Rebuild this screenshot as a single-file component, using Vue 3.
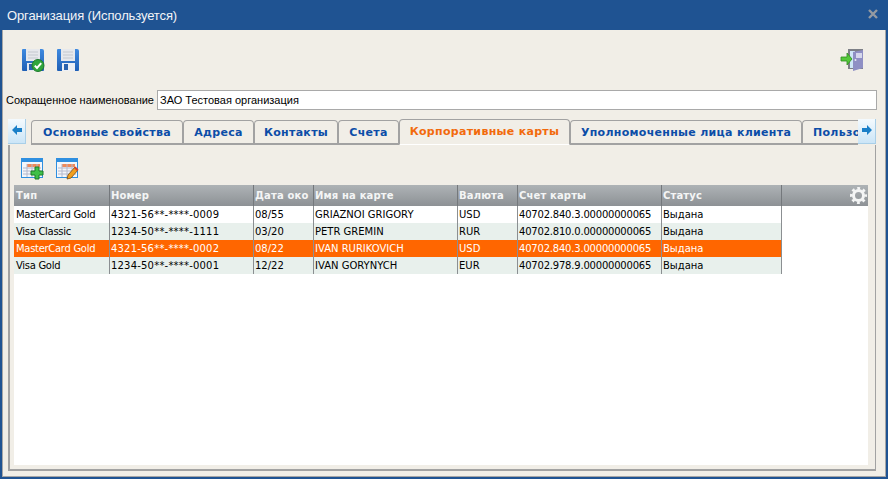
<template>
  <div class="window">
    <div class="titlebar">
      <span class="title">Организация (Используется)</span>
      <svg class="close" width="10" height="10" viewBox="0 0 10 10">
        <path d="M1 1 L9 9 M9 1 L1 9" stroke="#949aa2" stroke-width="2.4" />
      </svg>
    </div>

    <div class="body">
      <div class="toolbar">
        <div class="toolbar-left">
          <svg class="icon" width="24" height="24" viewBox="0 0 24 24">
            <defs>
              <linearGradient id="disk" x1="0" y1="0" x2="0" y2="1">
                <stop offset="0" stop-color="#3f8ae0" />
                <stop offset="1" stop-color="#1f5fb5" />
              </linearGradient>
            </defs>
            <path d="M1 2 Q1 1 2 1 H21 Q23 1 23 3 V22 Q23 23 22 23 H2 Q1 23 1 22 Z" fill="url(#disk)" />
            <rect x="5" y="1" width="14" height="12" fill="#e6e8ec" />
            <path d="M7 4 H17 M7 7 H17 M7 10 H17" stroke="#c4c8ce" stroke-width="1.2" />
            <rect x="6" y="15" width="12" height="8" fill="#e4e8f0" />
            <rect x="8" y="16" width="4" height="6" fill="#2a62ae" />
            <circle cx="17" cy="17.5" r="6" fill="#2fa53c" stroke="#1f7a2c" />
            <path d="M13.8 17.6 L16 20 L20.2 15.2" fill="none" stroke="#fff" stroke-width="2" />
          </svg>
          <svg class="icon" width="24" height="24" viewBox="0 0 24 24">
            <path d="M1 2 Q1 1 2 1 H21 Q23 1 23 3 V22 Q23 23 22 23 H2 Q1 23 1 22 Z" fill="url(#disk)" />
            <rect x="5" y="1" width="14" height="12" fill="#e6e8ec" />
            <path d="M7 4 H17 M7 7 H17 M7 10 H17" stroke="#c4c8ce" stroke-width="1.2" />
            <rect x="6" y="15" width="13" height="8" fill="#eceff5" />
            <rect x="8" y="16" width="4" height="6" fill="#2a62ae" />
          </svg>
        </div>
        <svg class="icon" width="24" height="24" viewBox="0 0 24 24">
          <rect x="8" y="1" width="15" height="20" fill="#7d7f86" />
          <rect x="10" y="3" width="5" height="17" fill="#cfe6f7" />
          <path d="M13 4 L23 2 V20 L13 23 Z" fill="#8f8fc4" />
          <rect x="16" y="5" width="6" height="5" fill="#d5d7ec" />
          <circle cx="15.5" cy="12" r="1" fill="#e8e8f2" />
          <path d="M1 9 H7 V5 L12 11 L7 17 V13 H1 Z" fill="#55c83a" stroke="#2d8d1e" stroke-width="0.8" />
        </svg>
      </div>

      <div class="name-row">
        <label class="name-label">Сокращенное наименование</label>
        <input class="name-input" value="ЗАО Тестовая организация" />
      </div>

      <div class="tabs-row">
        <button class="scroll-btn">
          <svg width="10" height="10" viewBox="0 0 10 10"><path d="M0 5 L5 0 V3 H10 V7 H5 V10 Z" fill="#1a7fc8" /></svg>
        </button>
        <div class="tabs">
          <div
            v-for="tab in tabs"
            :key="tab.label"
            class="tab"
            :class="{ 'tab--active': tab.active }"
            :style="{ width: `${tab.width}px` }"
          >{{ tab.label }}</div>
        </div>
        <button class="scroll-btn">
          <svg width="10" height="10" viewBox="0 0 10 10"><path d="M10 5 L5 0 V3 H0 V7 H5 V10 Z" fill="#1a7fc8" /></svg>
        </button>
      </div>

      <div class="panel">
        <div class="panel-tools">
          <svg class="icon" width="23" height="22" viewBox="0 0 23 22">
            <rect x="0.5" y="0.5" width="21" height="19" fill="#f4f6fa" stroke="#2f8fe0" />
            <rect x="1" y="1" width="20" height="3" fill="#2f8fe0" />
            <rect x="6" y="6" width="13" height="3" fill="#f08a5a" />
            <path d="M2 10 H20 M2 13 H20 M2 16 H20 M6 6 V19 M11 6 V19 M16 6 V19" stroke="#b4b8cc" stroke-width="1" />
            <path d="M14 9 H18 V13 H22 V17 H18 V21 H14 V17 H10 V13 H14 Z" fill="#3fc048" stroke="#1c7a26" stroke-width="1" />
          </svg>
          <svg class="icon" width="23" height="22" viewBox="0 0 23 22">
            <rect x="0.5" y="0.5" width="21" height="19" fill="#f4f6fa" stroke="#2f8fe0" />
            <rect x="1" y="1" width="20" height="3" fill="#2f8fe0" />
            <rect x="6" y="6" width="13" height="3" fill="#f08a5a" />
            <path d="M2 10 H20 M2 13 H20 M2 16 H20 M6 6 V19 M11 6 V19 M16 6 V19" stroke="#b4b8cc" stroke-width="1" />
            <path d="M12 17 L19 9 L22 12 L15 20 L11 21 Z" fill="#f0a020" stroke="#7a4a10" stroke-width="0.8" />
            <path d="M18 10 L19.5 8.5 L22.5 11.5 L21 13 Z" fill="#d8402c" />
          </svg>
        </div>

        <div class="grid">
          <div class="grid-head">
            <div v-for="col in columns" :key="col.title" class="head-cell" :style="{ width: `${col.width}px` }">{{ col.title }}</div>
            <div class="head-rest">
              <svg width="17" height="17" viewBox="0 0 17 17">
                <circle cx="8.5" cy="8.5" r="5" fill="none" stroke="#f4f5f5" stroke-width="3" />
                <circle cx="8.5" cy="8.5" r="7.2" fill="none" stroke="#f4f5f5" stroke-width="2.6" stroke-dasharray="2.8 2.85" stroke-dashoffset="1.4" />
              </svg>
            </div>
          </div>
          <div
            v-for="(row, i) in rows"
            :key="row[1]"
            class="grid-row"
            :class="{ 'grid-row--alt': i % 2 === 1, 'grid-row--selected': i === 2 }"
          >
            <div
              v-for="(value, c) in row"
              :key="c"
              class="cell"
              :style="{ width: `${columns[c].width}px` }"
            >{{ value }}</div>
          </div>
        </div>
      </div>
    </div>
  </div>
</template>

<script setup>
const tabs = [
  { label: 'Основные свойства', width: 152 },
  { label: 'Адреса', width: 71 },
  { label: 'Контакты', width: 84 },
  { label: 'Счета', width: 61 },
  { label: 'Корпоративные карты', width: 171, active: true },
  { label: 'Уполномоченные лица клиента', width: 232 },
  { label: 'Пользо', width: 56 },
]

const columns = [
  { title: 'Тип', width: 96 },
  { title: 'Номер', width: 144 },
  { title: 'Дата око', width: 60 },
  { title: 'Имя на карте', width: 144 },
  { title: 'Валюта', width: 60 },
  { title: 'Счет карты', width: 144 },
  { title: 'Статус', width: 120 },
]

const rows = [
  ['MasterCard Gold', '4321-56**-****-0009', '08/55', 'GRIAZNOI GRIGORY', 'USD', '40702.840.3.00000000065', 'Выдана'],
  ['Visa Classic', '1234-50**-****-1111', '03/20', 'PETR GREMIN', 'RUR', '40702.810.0.00000000065', 'Выдана'],
  ['MasterCard Gold', '4321-56**-****-0002', '08/22', 'IVAN RURIKOVICH', 'USD', '40702.840.3.00000000065', 'Выдана'],
  ['Visa Gold', '1234-50**-****-0001', '12/22', 'IVAN GORYNYCH', 'EUR', '40702.978.9.00000000065', 'Выдана'],
]
</script>

<style scoped>
.window {
  width: 888px;
  height: 479px;
  background: #1f5392;
  display: flex;
  flex-direction: column;
  font-family: "DejaVu Sans", sans-serif;
  overflow: hidden;
}

.titlebar {
  height: 30px;
  flex-shrink: 0;
  display: flex;
  align-items: center;
  justify-content: space-between;
  padding: 0 10px 0 7px;
}

.title {
  color: #f2f4f7;
  font-family: "Liberation Sans", sans-serif;
  font-size: 13px;
  letter-spacing: -0.12px;
}

.close {
  margin-bottom: 2px;
}

.body {
  flex: 1;
  margin: 0 2px 2px;
  border-left: 1px solid #a6a6a6;
  border-right: 1px solid #a6a6a6;
  border-bottom: 1px solid #a6a6a6;
  background: #f1eee7;
  display: flex;
  flex-direction: column;
  min-height: 0;
}

.toolbar {
  height: 60px;
  flex-shrink: 0;
  display: flex;
  align-items: center;
  justify-content: space-between;
  padding: 0 21px 0 18px;
}

.toolbar-left {
  display: flex;
  gap: 11px;
}

.icon {
  display: block;
}

.name-row {
  height: 20px;
  flex-shrink: 0;
  display: flex;
  align-items: center;
  padding: 0 8px 0 3px;
}

.name-label {
  width: 151px;
  flex-shrink: 0;
  font-family: "Liberation Sans", sans-serif;
  font-size: 11px;
  color: #000;
}

.name-input {
  flex: 1;
  height: 20px;
  box-sizing: border-box;
  border: 1px solid #a9a9a9;
  background: #fff;
  padding: 0 2px;
  font-family: "Liberation Sans", sans-serif;
  font-size: 11px;
  color: #000;
  outline: none;
}

.tabs-row {
  display: flex;
  height: 26px;
  margin-top: 9px;
  padding: 0 9px 0 5px;
  flex-shrink: 0;
}

.scroll-btn {
  width: 18px;
  height: 25px;
  flex-shrink: 0;
  padding: 0 0 3px;
  border: none;
  border-right: 1px solid #a9cfe8;
  border-bottom: 1px solid #a9cfe8;
  background: linear-gradient(#f4fafe, #cbe5f7);
  display: flex;
  align-items: center;
  justify-content: center;
}

.tabs {
  flex: 1;
  display: flex;
  align-items: flex-end;
  padding-left: 5px;
  overflow: hidden;
}

.tab {
  height: 25px;
  flex-shrink: 0;
  box-sizing: border-box;
  border: 1px solid #a2a2a2;
  border-bottom-width: 2px;
  border-radius: 4px 4px 0 0;
  padding-top: 1px;
  color: #0c4da8;
  font-size: 11px;
  font-weight: bold;
  letter-spacing: 0.3px;
  line-height: 22px;
  text-align: center;
  white-space: nowrap;
  overflow: hidden;
}

.tab:last-child {
  text-align: left;
  padding-left: 10px;
  border-right: none;
  border-top-right-radius: 0;
}

.tab--active {
  height: 26px;
  padding-top: 0;
  color: #f26a0c;
  line-height: 23px;
  border-bottom: 1px solid #fff;
}

.panel {
  flex: 1;
  min-height: 0;
  margin: 0 9px 5px 5px;
  border-left: 2px solid #a2a2a2;
  border-right: 1px solid #a2a2a2;
  border-bottom: 2px solid #a2a2a2;
  display: flex;
  flex-direction: column;
  padding: 0 7px 4px 4px;
}

.panel-tools {
  height: 40px;
  flex-shrink: 0;
  display: flex;
  align-items: center;
  gap: 12px;
  padding-left: 7px;
  padding-top: 8px;
  box-sizing: border-box;
}

.grid {
  flex: 1;
  background: #fff;
  min-height: 0;
}

.grid-head {
  height: 21px;
  display: flex;
  background: linear-gradient(#aeb3b6, #8d9195);
}

.head-cell {
  flex-shrink: 0;
  box-sizing: border-box;
  border-right: 1px solid #74787c;
  padding-left: 1px;
  color: #f4f5f5;
  font-size: 10px;
  font-weight: bold;
  letter-spacing: 0.15px;
  line-height: 21px;
  white-space: nowrap;
  overflow: hidden;
}

.head-cell:first-child {
  padding-left: 2px;
}

.head-rest {
  flex: 1;
  display: flex;
  align-items: center;
  justify-content: flex-end;
  padding-right: 1px;
}

.grid-row {
  height: 17px;
  display: flex;
}

.grid-row--alt {
  --row-bg: #e8f0ec;
}

.grid-row--selected {
  --row-bg: #ff6600;
}

.cell {
  flex-shrink: 0;
  box-sizing: border-box;
  background: var(--row-bg, #fff);
  border-right: 1px solid #8b8f92;
  padding-left: 1px;
  font-size: 10px;
  line-height: 17px;
  white-space: nowrap;
  overflow: hidden;
}

.cell:nth-child(1) {
  padding-left: 2px;
  letter-spacing: -0.3px;
}

.cell:nth-child(2) {
  letter-spacing: 0.2px;
}

.cell:nth-child(6) {
  letter-spacing: -0.2px;
}

.grid-row--selected .cell {
  color: #fff;
}
</style>

<style>
html, body {
  margin: 0;
  background: #1f5392;
}
</style>
